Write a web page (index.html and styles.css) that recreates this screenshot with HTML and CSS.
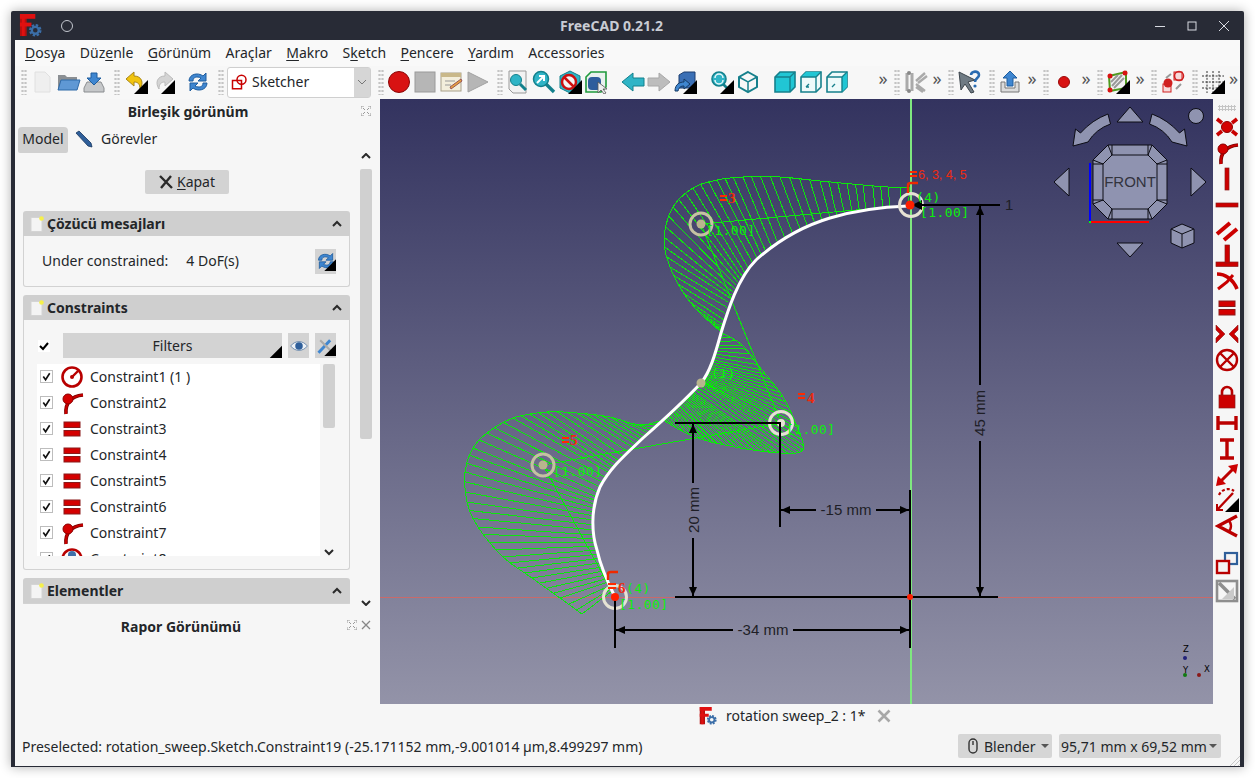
FILE: index.html
```html
<!DOCTYPE html>
<html lang="tr">
<head>
<meta charset="utf-8">
<title>FreeCAD 0.21.2</title>
<link rel="stylesheet" href="styles.css">
</head>
<body>
<svg class="defs" aria-hidden="true">
  <symbol id="logo" viewBox="0 0 24 24">
    <rect x="1" y="0" width="7" height="23" fill="#b50f0f"/><rect x="1" y="0" width="16" height="5" fill="#e01010"/><rect x="1" y="9" width="12" height="4" fill="#e01010"/><rect x="3" y="0" width="3" height="23" fill="#e01010"/>
    <circle cx="17" cy="17" r="5" fill="none" stroke="#3b6ea8" stroke-width="3" stroke-dasharray="2.4 1.5"/><circle cx="17" cy="17" r="3.6" fill="none" stroke="#3b6ea8" stroke-width="2.4"/>
  </symbol>
  <symbol id="corner" viewBox="0 0 24 24"><polygon points="24,10 24,24 10,24" fill="#000"/></symbol>
  <symbol id="paneldoc" viewBox="0 0 14 16"><rect x="1" y="1.5" width="11" height="14" fill="#f4f4f4" stroke="#d4d4d4"/><circle cx="11.5" cy="2.5" r="2.3" fill="#f6f04a"/></symbol>
  <symbol id="chev" viewBox="0 0 12 12"><path d="M2 8 L6 4 L10 8" fill="none" stroke="#2a2a2a" stroke-width="2"/></symbol>
  <symbol id="chevd" viewBox="0 0 12 12"><path d="M2 4 L6 8 L10 4" fill="none" stroke="#2a2a2a" stroke-width="2"/></symbol>
  <symbol id="refresh" viewBox="0 0 24 24"><path d="M3 11 C3 4 12 2 17 6 L20 3 V11 H12 L15 8 C11 6 7 7 7 11 Z" fill="#3f86d0" stroke="#1f5d9e"/><path d="M21 13 C21 20 12 22 7 18 L4 21 V13 H12 L9 16 C13 18 17 17 17 13 Z" fill="#3f86d0" stroke="#1f5d9e"/></symbol>
  <symbol id="c-tan" viewBox="0 0 24 24"><path d="M6 23 C5 12 11 5 23 4" fill="none" stroke="#7a0000" stroke-width="3.6"/><path d="M6 23 C5 12 11 5 23 4" fill="none" stroke="#c80000" stroke-width="2"/><circle cx="8" cy="8" r="5" fill="#d40000" stroke="#8a0000"/></symbol>
  <symbol id="c-eq" viewBox="0 0 24 24"><rect x="4" y="5" width="16" height="5.5" fill="#d40000" stroke="#8a1a1a"/><rect x="4" y="13.5" width="16" height="5.5" fill="#d40000" stroke="#8a1a1a"/></symbol>
  <symbol id="cube" viewBox="0 0 24 24"><path d="M12 2 L21 7 V17 L12 22 L3 17 V7 Z" fill="none" stroke="#16808c" stroke-width="2"/><path d="M3 7 L12 12 L21 7 M12 12 V22" fill="none" stroke="#16808c" stroke-width="1.5"/></symbol>
</svg>

<div class="window">
  <header class="titlebar">
    <svg class="tlogo"><use href="#logo"/></svg>
    <span class="pin"></span>
    <h1 class="wtitle">FreeCAD 0.21.2</h1>
    <svg class="wbtn" viewBox="0 0 12 12"><path d="M1 6.5 H11" stroke="#d8dbe2" fill="none"/></svg>
    <svg class="wbtn" viewBox="0 0 12 12"><rect x="2" y="2" width="8" height="8" stroke="#d8dbe2" fill="none"/></svg>
    <svg class="wbtn" viewBox="0 0 12 12"><path d="M1 1 L11 11 M11 1 L1 11" stroke="#d8dbe2" fill="none"/></svg>
  </header>

  <div class="content">
    <nav class="menubar">
      <span class="menu"><u>D</u>osya</span>
      <span class="menu">Düz<u>e</u>nle</span>
      <span class="menu"><u>G</u>örünüm</span>
      <span class="menu">Araçlar</span>
      <span class="menu"><u>M</u>akro</span>
      <span class="menu">S<u>k</u>etch</span>
      <span class="menu"><u>P</u>encere</span>
      <span class="menu"><u>Y</u>ardım</span>
      <span class="menu">Accessories</span>
    </nav>

    <div class="toolbar">
      <span class="grip m6"></span>
      <svg class="ti m2" viewBox="0 0 24 24"><path d="M5 2 H15 L20 7 V22 H5 Z" fill="#efefef" stroke="#e0e0e0"/></svg>
      <svg class="ti" viewBox="0 0 24 24"><path d="M2 5 H9 L11 7 H21 V20 H2 Z" fill="#8b8f93"/><path d="M5 10 H24 L21 20 H2 Z" fill="#5f98d4" stroke="#2f6aa8"/></svg>
      <svg class="ti" viewBox="0 0 24 24"><path d="M5 12 H19 L22 18 V22 H2 V18 Z" fill="#c6c8ca" stroke="#8a8d90"/><path d="M9 3 H15 V8 H19 L12 15 L5 8 H9 Z" fill="#3f86d0" stroke="#1f5d9e"/></svg>
      <span class="grip m7"></span>
      <svg class="ti m3" viewBox="0 0 24 24"><path d="M10 2 L2 9 L10 16 V12 C14 12 16 14 16 19 C20 13 18 6 10 6 Z" fill="#f1c40f" stroke="#a8861a"/><use href="#corner"/></svg>
      <svg class="ti m1" viewBox="0 0 24 24"><path d="M14 2 L22 9 L14 16 V12 C10 12 8 14 8 19 C4 13 6 6 14 6 Z" fill="#d4d4d4" stroke="#bbb"/><use href="#corner"/></svg>
      <svg class="ti m9" viewBox="0 0 24 24"><use href="#refresh"/></svg>
      <span class="grip m7"></span>
      <div class="combo m3">
        <svg class="combo-ic" viewBox="0 0 24 24"><rect x="2" y="10" width="12" height="11" fill="#fff" stroke="#c80000" stroke-width="2"/><circle cx="14" cy="9" r="6" fill="none" stroke="#c80000" stroke-width="2"/></svg>
        <span class="combo-text">Sketcher</span>
        <span class="combo-arrow"><svg viewBox="0 0 12 12"><path d="M2 4 L6 8 L10 4" fill="none" stroke="#777"/></svg></span>
      </div>
      <span class="grip m7"></span>
      <svg class="ti m2" viewBox="0 0 24 24"><circle cx="12" cy="12" r="10.5" fill="#d81212" stroke="#8a0606"/></svg>
      <svg class="ti" viewBox="0 0 24 24"><rect x="2" y="2" width="20" height="20" fill="#b6b6b6" stroke="#9a9a9a"/></svg>
      <svg class="ti" viewBox="0 0 24 24"><rect x="2" y="3" width="20" height="18" fill="#f3eedc" stroke="#a8a08a"/><rect x="2" y="3" width="20" height="4" fill="#c9b88a"/><path d="M6 11 H16 M6 15 H12" stroke="#999"/><path d="M11 17 L22 9 L23 11 L12 19 Z" fill="#e8a33d" stroke="#955"/></svg>
      <svg class="ti" viewBox="0 0 24 24"><polygon points="3,2 23,12 3,22" fill="#b6b6b6" stroke="#a2a2a2"/></svg>
      <span class="grip m7"></span>
      <svg class="ti m2" viewBox="0 0 24 24"><path d="M3 1 H20 V23 H7 L3 19 Z" fill="#f2f2f2" stroke="#999"/><circle cx="10" cy="10" r="5.5" fill="#2fb4c6" stroke="#13808c"/><path d="M14 14 L20 20" stroke="#13808c" stroke-width="3"/></svg>
      <svg class="ti" viewBox="0 0 24 24"><circle cx="9" cy="9" r="7.5" fill="#2fb4c6" stroke="#13808c" stroke-width="1.5"/><path d="M14 14 L22 22" stroke="#13808c" stroke-width="3.4"/><path d="M5 13 L11 7 M7 6 H12 V11" stroke="#fff" stroke-width="2" fill="none"/></svg>
      <svg class="ti" viewBox="0 0 24 24"><path d="M12 1 L22 6 V18 L12 23 L2 18 V6 Z" fill="#2fb4c6" stroke="#13808c"/><circle cx="11" cy="12" r="7" fill="#f4f4f4" stroke="#cc1010" stroke-width="2.5"/><path d="M6 7 L16 17" stroke="#cc1010" stroke-width="2.5"/><use href="#corner"/></svg>
      <svg class="ti" viewBox="0 0 24 24"><path d="M2 7 L7 2 H22 V17 L17 22 H2 Z" fill="#e9f1ee" stroke="#1f9a3c" stroke-width="1.6"/><rect x="4" y="7" width="13" height="13" rx="4" fill="#2e5d9c"/><path d="M14 12 L14 23 L17 20 L20 24 L22 23 L19 19 L23 19 Z" fill="#eee" stroke="#555" stroke-width=".8"/></svg>
      <svg class="ti m11" viewBox="0 0 24 24"><polygon points="1,12 12,3 12,8 23,8 23,16 12,16 12,21" fill="#2fb4c6" stroke="#13808c"/></svg>
      <svg class="ti" viewBox="0 0 24 24"><polygon points="23,12 12,3 12,8 1,8 1,16 12,16 12,21" fill="#bdbdbd" stroke="#a8a8a8"/></svg>
      <svg class="ti" viewBox="0 0 24 24"><path d="M6 5 L11 2 H22 V14 L19 18 H6 Z" fill="#3a6fb5" stroke="#1d3f70"/><path d="M2 21 C2 14 7 12 11 12 V9 L17 14 L11 19 V16 C8 16 6 17 5 21 Z" fill="#3f86d0" stroke="#153a63"/><use href="#corner"/></svg>
      <svg class="ti m11" viewBox="0 0 24 24"><circle cx="9" cy="9" r="7" fill="#2fb4c6" stroke="#13808c" stroke-width="1.6"/><path d="M5 8 A4 4 0 0 1 13 8 M13 10 A4 4 0 0 1 5 10" stroke="#eaf6f8" stroke-width="1.5" fill="none"/><path d="M13 14 L20 21" stroke="#13808c" stroke-width="2.6"/><use href="#corner"/></svg>
      <svg class="ti" viewBox="0 0 24 24"><use href="#cube"/></svg>
      <svg class="ti m11" viewBox="0 0 24 24"><path d="M7 2 H22 V17 L17 22 H2 V7 Z" fill="#21c6d4" stroke="#16808c" stroke-width="1.6"/><path d="M2 7 H17 V22 M17 7 L22 2" fill="none" stroke="#16808c" stroke-width="1.4"/></svg>
      <svg class="ti" viewBox="0 0 24 24"><path d="M7 2 H22 V17 L17 22 H2 V7 Z" fill="#eefafa" stroke="#16808c" stroke-width="1.6"/><path d="M2 7 L7 2 H22 L17 7 Z" fill="#21c6d4"/><path d="M2 7 H17 V22 M17 7 L22 2 M7 17 L10 14 M7 17 H10" fill="none" stroke="#16808c" stroke-width="1.4"/></svg>
      <svg class="ti" viewBox="0 0 24 24"><path d="M7 2 H22 V17 L17 22 H2 V7 Z" fill="#eefafa" stroke="#16808c" stroke-width="1.6"/><path d="M17 7 L22 2 V17 L17 22 Z" fill="#21c6d4"/><path d="M2 7 H17 V22 M17 7 L22 2 M7 17 L10 14" fill="none" stroke="#16808c" stroke-width="1.4"/></svg>
      <span class="more m25">»</span>
      <span class="grip m3"></span>
      <svg class="ti m2" viewBox="0 0 24 24"><path d="M4 3 V21 M9 3 V21" stroke="#aaa" stroke-width="3"/><circle cx="6" cy="3" r="2" fill="#888"/><circle cx="6" cy="21" r="2" fill="#888"/><path d="M13 11 L22 3 M15 13 L24 6 M13 14 L22 21 M13 17 L20 22" stroke="#aaa" stroke-width="2.4"/></svg>
      <span class="more m1">»</span>
      <span class="grip m3"></span>
      <svg class="ti m2" viewBox="0 0 24 24"><path d="M2 2 L18 10 L11 12 L17 22 L14 23 L8 14 L4 20 Z" fill="#6f7b84" stroke="#3b444b"/><path d="M14 5 C14 1 22 0 22 5 C22 8 18 8 18 12" fill="none" stroke="#2a6bb0" stroke-width="2.6"/><circle cx="18" cy="16" r="1.6" fill="#2a6bb0"/></svg>
      <span class="grip m7"></span>
      <svg class="ti m2" viewBox="0 0 24 24"><path d="M3 12 V22 H21 V12 H17 V18 H7 V12 Z" fill="#dcdcdc" stroke="#777"/><path d="M9 16 V8 H5 L12 1 L19 8 H15 V16 Z" fill="#3f86d0" stroke="#1f5d9e"/></svg>
      <span class="more m1">»</span>
      <span class="grip m3"></span>
      <svg class="ti m2" viewBox="0 0 24 24"><circle cx="12" cy="12" r="5.5" fill="#d81212" stroke="#9a0a0a"/></svg>
      <span class="more m1">»</span>
      <span class="grip m3"></span>
      <svg class="ti m2" viewBox="0 0 24 24"><path d="M3 6 L20 2 V18 L4 21 Z" fill="#f2f2f2" stroke="#4e9a1e" stroke-width="2"/><path d="M6 16 L16 5 M8 18 L18 8 M5 12 L12 5" stroke="#999" stroke-width="2"/><circle cx="4" cy="6" r="2.5" fill="#d81212"/><circle cx="19" cy="3" r="2.5" fill="#d81212"/><circle cx="4" cy="20" r="2.5" fill="#d81212"/><use href="#corner"/></svg>
      <span class="more m1">»</span>
      <span class="grip m3"></span>
      <svg class="ti m3" viewBox="0 0 24 24"><rect x="13" y="2" width="8" height="8" fill="#f7dada" stroke="#d02020"/><circle cx="18" cy="6" r="4.5" fill="none" stroke="#d02020" stroke-width="1.6"/><rect x="2" y="14" width="8" height="8" fill="#f7dada" stroke="#d02020"/><circle cx="7" cy="13" r="4.5" fill="#d02020"/><path d="M5 8 L10 4 M15 19 L20 14" stroke="#999" stroke-width="2"/></svg>
      <span class="grip m6"></span>
      <svg class="ti m2" viewBox="0 0 24 24"><path d="M1 6 H23 M1 12 H23 M1 18 H23 M6 1 V23 M12 1 V23 M18 1 V23" stroke="#333" stroke-width="1" stroke-dasharray="2 1.4" fill="none"/><use href="#corner"/></svg>
      <span class="more m1 last">»</span>
    </div>

    <div class="main">
      <aside class="dock">
        <div class="dock-title">
          <span class="dock-label">Birleşik görünüm</span>
          <svg class="float" viewBox="0 0 10 10"><path d="M0 3 V0 H3 M7 0 H10 V3 M10 7 V10 H7 M3 10 H0 V7 M2 2 L4 4 M8 2 L6 4 M8 8 L6 6 M2 8 L4 6" fill="none" stroke="#999"/></svg>
        </div>
        <div class="tabs">
          <span class="tab active">Model</span>
          <span class="tab">
            <svg class="tab-ic" viewBox="0 0 18 18"><path d="M1 3 L4 1 L16 13 L17 17 L13 16 Z" fill="#2f5f9a" stroke="#16365e" stroke-width=".8"/></svg>
            Görevler
          </span>
        </div>
        <div class="scroll">
          <div class="scroll-body">
            <button class="close-btn">
              <svg class="close-ic" viewBox="0 0 14 14"><path d="M1 1 L13 13 M12 1 L2 13" stroke="#2a2a2a" stroke-width="2.4"/></svg>
              <span><u>K</u>apat</span>
            </button>
            <section class="panel">
              <div class="panel-head"><svg class="pdoc"><use href="#paneldoc"/></svg><span class="panel-title">Çözücü mesajları</span><svg class="pchev"><use href="#chev"/></svg></div>
              <div class="panel-body solver">
                <span>Under constrained:</span><span class="dof">4 DoF(s)</span>
                <span class="ibtn end"><svg viewBox="0 0 24 24"><use href="#refresh"/><use href="#corner"/></svg></span>
              </div>
            </section>
            <section class="panel">
              <div class="panel-head"><svg class="pdoc"><use href="#paneldoc"/></svg><span class="panel-title">Constraints</span><svg class="pchev"><use href="#chev"/></svg></div>
              <div class="panel-body constraints">
                <div class="filters">
                  <span class="allcheck"><svg viewBox="0 0 12 12"><path d="M2 6 L5 9 L10 3" fill="none" stroke="#000" stroke-width="2"/></svg></span>
                  <button class="filter-btn">Filters<svg class="corner"><use href="#corner"/></svg></button>
                  <span class="ibtn"><svg viewBox="0 0 24 24"><path d="M2 12 C7 5 17 5 22 12 C17 19 7 19 2 12 Z" fill="#eef2f6" stroke="#5c7ea6"/><circle cx="12" cy="12" r="4.5" fill="#2f5f9a"/></svg></span>
                  <span class="ibtn"><svg viewBox="0 0 24 24"><path d="M3 20 L17 5" stroke="#3f86d0" stroke-width="3.5"/><path d="M5 5 L18 18" stroke="#aaa" stroke-width="2.5"/><use href="#corner"/></svg></span>
                </div>
                <div class="listwrap">
                  <ul class="clist">
                    <li><span class="cb"><svg viewBox="0 0 12 12"><path d="M2.5 6 L5 9.5 L9.5 2.5" fill="none" stroke="#111" stroke-width="1.8"/></svg></span><svg class="ci" viewBox="0 0 24 24"><circle cx="12" cy="12" r="9.5" fill="#fff" stroke="#b80000" stroke-width="2.6"/><path d="M12 12 L18 6" stroke="#b80000" stroke-width="2.4"/><circle cx="12" cy="12" r="2" fill="#b80000"/></svg>Constraint1 (1 )</li>
                    <li><span class="cb"><svg viewBox="0 0 12 12"><path d="M2.5 6 L5 9.5 L9.5 2.5" fill="none" stroke="#111" stroke-width="1.8"/></svg></span><svg class="ci"><use href="#c-tan"/></svg>Constraint2</li>
                    <li><span class="cb"><svg viewBox="0 0 12 12"><path d="M2.5 6 L5 9.5 L9.5 2.5" fill="none" stroke="#111" stroke-width="1.8"/></svg></span><svg class="ci"><use href="#c-eq"/></svg>Constraint3</li>
                    <li><span class="cb"><svg viewBox="0 0 12 12"><path d="M2.5 6 L5 9.5 L9.5 2.5" fill="none" stroke="#111" stroke-width="1.8"/></svg></span><svg class="ci"><use href="#c-eq"/></svg>Constraint4</li>
                    <li><span class="cb"><svg viewBox="0 0 12 12"><path d="M2.5 6 L5 9.5 L9.5 2.5" fill="none" stroke="#111" stroke-width="1.8"/></svg></span><svg class="ci"><use href="#c-eq"/></svg>Constraint5</li>
                    <li><span class="cb"><svg viewBox="0 0 12 12"><path d="M2.5 6 L5 9.5 L9.5 2.5" fill="none" stroke="#111" stroke-width="1.8"/></svg></span><svg class="ci"><use href="#c-eq"/></svg>Constraint6</li>
                    <li><span class="cb"><svg viewBox="0 0 12 12"><path d="M2.5 6 L5 9.5 L9.5 2.5" fill="none" stroke="#111" stroke-width="1.8"/></svg></span><svg class="ci"><use href="#c-tan"/></svg>Constraint7</li>
                    <li><span class="cb"><svg viewBox="0 0 12 12"><path d="M2.5 6 L5 9.5 L9.5 2.5" fill="none" stroke="#111" stroke-width="1.8"/></svg></span><svg class="ci" viewBox="0 0 24 24"><circle cx="12" cy="12" r="9.5" fill="#fff" stroke="#b80000" stroke-width="2.6"/><circle cx="12" cy="8" r="4" fill="#3f6fa8"/></svg>Constraint8</li>
                  </ul>
                  <div class="listbar">
                    <span class="listthumb"></span>
                    <svg class="listchev"><use href="#chevd"/></svg>
                  </div>
                </div>
              </div>
            </section>
            <section class="panel">
              <div class="panel-head"><svg class="pdoc"><use href="#paneldoc"/></svg><span class="panel-title">Elementler</span><svg class="pchev"><use href="#chev"/></svg></div>
              <div class="panel-body"></div>
            </section>
          </div>
          <div class="vbar">
            <svg class="vchev"><use href="#chev"/></svg>
            <span class="vthumb"></span>
            <svg class="vchev bottom"><use href="#chevd"/></svg>
          </div>
        </div>
        <div class="dock-title report">
          <span class="dock-label">Rapor Görünümü</span>
          <svg class="float" viewBox="0 0 10 10"><path d="M0 3 V0 H3 M7 0 H10 V3 M10 7 V10 H7 M3 10 H0 V7 M2 2 L4 4 M8 2 L6 4 M8 8 L6 6 M2 8 L4 6" fill="none" stroke="#999"/></svg>
          <svg class="float" viewBox="0 0 10 10"><path d="M1 1 L9 9 M9 1 L1 9" fill="none" stroke="#888" stroke-width="1.3"/></svg>
        </div>
      </aside>

      <div class="viewport">
        <svg class="scene" viewBox="380 99 833 605" width="833" height="605">
          <path class="axis-x" d="M380 597 H1213"/>
          <path class="axis-y" d="M911 99 V704"/>
          <g id="comb" class="comb"></g>
          <path class="ctrl" d="M911 205 L701 224 L781 423 L543 465 L615 597"/>
          <path class="curve" d="M908 206 C880 207 850 212 830 218 C800 227 775 243 756 260 C738 278 728 310 721 333 C715 355 710 372 701 383 C685 400 660 423 643 438 C625 455 610 468 600 487 C590 510 592 535 597 550 C601 568 608 583 615 597"/>

          <g class="poles">
            <circle class="pole tan" cx="701" cy="224" r="11"/><circle class="pdot" cx="701" cy="224" r="4.5"/>
            <circle class="pole" cx="781" cy="423" r="11.5"/><circle class="pdot light" cx="781" cy="423" r="4"/>
            <circle class="pole tan" cx="543" cy="465" r="11"/><circle class="pdot" cx="543" cy="465" r="4.5"/>
            <circle class="pole" cx="911" cy="205" r="11.5"/>
            <circle class="pole" cx="615" cy="597" r="11.5"/>
            <circle class="pdot" cx="701" cy="383" r="4.5"/>
          </g>

          <g class="dims">
            <path d="M911 205 H1000"/>
            <path d="M980 205 V385 M980 441 V597"/>
            <path d="M675 597 H998"/>
            <path d="M675 423 H781"/>
            <path d="M693 423 V483 M693 538 V597"/>
            <path d="M780 423 V527"/>
            <path d="M910 490 V648"/>
            <path d="M780 510 H816 M876 510 H910"/>
            <path d="M615 597 V648"/>
            <path d="M615 630 H733 M793 630 H910"/>
          </g>
          <g class="arrows">
            <polygon points="980,206 976,215 984,215"/>
            <polygon points="980,596 976,587 984,587"/>
            <polygon points="693,424 689,433 697,433"/>
            <polygon points="693,596 689,587 697,587"/>
            <polygon points="781,510 790,506 790,514"/>
            <polygon points="909,510 900,506 900,514"/>
            <polygon points="616,630 625,626 625,634"/>
            <polygon points="909,630 900,626 900,634"/>
            <polygon points="912,205 922,200 922,210"/>
          </g>
          <text class="dimt" x="1005" y="210">1</text>
          <text class="dimt" transform="translate(985 413) rotate(-90)" text-anchor="middle">45 mm</text>
          <text class="dimt" transform="translate(699 510) rotate(-90)" text-anchor="middle">20 mm</text>
          <text class="dimt" x="846" y="515" text-anchor="middle">-15 mm</text>
          <text class="dimt" x="763" y="635" text-anchor="middle">-34 mm</text>

          <circle class="rdot" cx="910" cy="205" r="4.5"/>
          <circle class="rdot" cx="615" cy="597" r="4"/>
          <circle class="rdot" cx="910" cy="597" r="3"/>

          <g class="glabels">
            <text x="920" y="217">[1.00]</text><text x="916" y="202">(4)</text>
            <text x="706" y="235">[1.00]</text><text x="711" y="378">(1)</text>
            <text x="786" y="434">[1.00]</text>
            <text x="553" y="476">[1.00]</text>
            <text x="619" y="609">[1.00]</text><text x="626" y="593">(4)</text>
          </g>
          <g class="rmarks">
            <rect x="910" y="171" width="7" height="2"/><rect x="910" y="175" width="7" height="2"/>
            <rect x="720" y="195" width="7" height="2"/><rect x="720" y="199" width="7" height="2"/>
            <rect x="798" y="393" width="7" height="2"/><rect x="798" y="397" width="7" height="2"/>
            <rect x="562" y="437" width="7" height="2"/><rect x="562" y="441" width="7" height="2"/>
            <rect x="608" y="583" width="8" height="2"/><rect x="608" y="587" width="8" height="2"/>
            <path d="M908 193 V185 Q908 183 911 183 H918 M608 580 V574 Q608 572 611 572 H618" class="rtan"/>
          </g>
          <g class="rlabels">
            <text class="rlist" x="918" y="179">6, 3, 4, 5</text>
            <text x="728" y="203">3</text>
            <text x="807" y="403">4</text>
            <text x="570" y="445">5</text>
            <text x="618" y="593">6</text>
          </g>

          <g class="navcube">
            <path d="M1108 145 H1152 L1167 160 V204 L1152 219 H1108 L1093 204 V160 Z"/>
            <path class="inner" d="M1112 155 H1148 L1157 164 V200 L1148 209 H1112 L1103 200 V164 Z"/>
            <path class="inner" d="M1108 145 L1112 155 M1152 145 L1148 155 M1167 160 L1157 164 M1167 204 L1157 200 M1152 219 L1148 209 M1108 219 L1112 209 M1093 204 L1103 200 M1093 160 L1103 164 M1112 145 V155 M1148 145 V155 M1112 219 V209 M1148 219 V209 M1093 164 H1103 M1093 200 H1103 M1167 164 H1157 M1167 200 H1157"/>
            <polygon points="1117,122 1130,107 1143,122"/>
            <polygon points="1117,243 1143,243 1130,257"/>
            <polygon points="1069,168 1054,182 1069,196"/>
            <polygon points="1191,168 1206,182 1191,196"/>
            <circle cx="1196" cy="116" r="7.5"/>
            <path d="M1108 114 L1110.5 124 Q1096 129 1088 142 L1073 146 L1075.5 129 L1080.5 133 Q1092 120 1108 114 Z"/>
            <path d="M1152 114 L1149.5 124 Q1164 129 1172 142 L1187 146 L1184.5 129 L1179.5 133 Q1168 120 1152 114 Z"/>
            <path d="M1182 224 L1194 229 V243 L1182 248 L1171 243 V229 Z"/>
            <path class="inner" d="M1171 229 L1182 234 L1194 229 M1182 234 V248"/>
          </g>
          <text class="front" x="1130" y="187" text-anchor="middle">FRONT</text>
          <path class="ax-b" d="M1090 163 V222"/>
          <path class="ax-r" d="M1090 222 H1149"/>
          <rect class="ax-g" x="1089" y="221" width="2" height="2"/>

          <g class="triad">
            <circle class="tb" cx="1185" cy="658" r="2"/><circle class="tg" cx="1185" cy="675" r="2"/><circle class="tr" cx="1199" cy="675" r="2"/>
            <text x="1183" y="652">Z</text><text x="1183" y="673">Y</text><text x="1204" y="672">X</text>
          </g>
        </svg>
      </div>

      <div class="sidebar">
        <span class="hgrip"></span>
        <svg class="si" viewBox="0 0 24 24"><circle cx="12" cy="12" r="5.5" fill="#d40000" stroke="#8a0000"/><path d="M2 4 L7 8 M22 4 L17 8 M2 20 L7 16 M22 20 L17 16" stroke="#c80000" stroke-width="3.6"/></svg>
        <svg class="si"><use href="#c-tan"/></svg>
        <svg class="si" viewBox="0 0 24 24"><rect x="10" y="1" width="4" height="22" fill="#cc0000" stroke="#8a1a1a" stroke-width=".7"/></svg>
        <svg class="si" viewBox="0 0 24 24"><rect x="1" y="10" width="22" height="4" fill="#cc0000" stroke="#8a1a1a" stroke-width=".7"/></svg>
        <svg class="si" viewBox="0 0 24 24"><path d="M2 15 L15 4 M9 21 L22 10" stroke="#cc0000" stroke-width="4"/></svg>
        <svg class="si" viewBox="0 0 24 24"><rect x="1" y="18" width="22" height="4.5" fill="#cc0000" stroke="#8a1a1a" stroke-width=".7"/><rect x="10" y="1" width="4.5" height="18" fill="#cc0000" stroke="#8a1a1a" stroke-width=".7"/></svg>
        <svg class="si" viewBox="0 0 24 24"><path d="M2 4 C10 4 18 9 22 19" fill="none" stroke="#c80000" stroke-width="3.6"/><path d="M3 19 L12 12 L18 5" fill="none" stroke="#c80000" stroke-width="3"/></svg>
        <svg class="si"><use href="#c-eq"/></svg>
        <svg class="si" viewBox="0 0 24 24"><polygon points="1,3 10,12 1,21 1,16 5,12 1,8" fill="#cc0000" stroke="#8a1a1a" stroke-width=".6"/><polygon points="23,3 14,12 23,21 23,16 19,12 23,8" fill="#cc0000" stroke="#8a1a1a" stroke-width=".6"/></svg>
        <svg class="si" viewBox="0 0 24 24"><circle cx="12" cy="12" r="10" fill="none" stroke="#b80000" stroke-width="2.4"/><path d="M5 5 L19 19 M19 5 L5 19" stroke="#b80000" stroke-width="2.4"/></svg>
        <svg class="si gap-top" viewBox="0 0 24 24"><path d="M7 11 V7 A5 5 0 0 1 17 7 V11" fill="none" stroke="#b80000" stroke-width="2.6"/><rect x="4" y="10" width="16" height="13" fill="#cc0000" stroke="#8a1a1a" stroke-width=".7"/></svg>
        <svg class="si" viewBox="0 0 24 24"><path d="M3 5 V19 M21 5 V19 M3 12 H21" stroke="#bb0000" stroke-width="3.4"/></svg>
        <svg class="si" viewBox="0 0 24 24"><path d="M5 3 H19 M5 21 H19 M12 3 V21" stroke="#bb0000" stroke-width="3.4"/></svg>
        <svg class="si" viewBox="0 0 24 24"><path d="M5 19 L19 5" stroke="#bb0000" stroke-width="3"/><polygon points="1,23 3,13 11,21" fill="#cc0000"/><polygon points="23,1 21,11 13,3" fill="#cc0000"/></svg>
        <svg class="si" viewBox="0 0 24 24"><path d="M4 7 A10 10 0 0 1 19 3" fill="none" stroke="#b80000" stroke-width="2.2" stroke-dasharray="3 2"/><path d="M3 21 L18 5" stroke="#b80000" stroke-width="2.4"/><path d="M2 16 V22 H8" fill="none" stroke="#b80000" stroke-width="2"/><use href="#corner"/></svg>
        <svg class="si" viewBox="0 0 24 24"><path d="M22 2 L3 12 L22 22" fill="none" stroke="#bb0000" stroke-width="3.4"/><path d="M13 6 C17 9 17 15 13 18" fill="none" stroke="#bb0000" stroke-width="2.4"/></svg>
        <svg class="si gap-top2" viewBox="0 0 24 24"><rect x="10" y="2" width="12" height="11" fill="#f4f4f4" stroke="#2f5f9a" stroke-width="2.2"/><rect x="2" y="10" width="12" height="12" fill="#f4f4f4" stroke="#b80000" stroke-width="2.4"/></svg>
        <svg class="si tight" viewBox="0 0 24 24"><rect x="2" y="2" width="20" height="20" fill="none" stroke="#8e8e8e" stroke-width="2.6"/><path d="M4 4 L20 20" stroke="#8e8e8e" stroke-width="3.6"/><path d="M7 20 H19 V8 Z" fill="#c9c9c9"/></svg>
      </div>
    </div>

    <div class="tabbar">
      <svg class="doc-ic"><use href="#logo"/></svg>
      <span class="doc-name">rotation sweep_2 : 1*</span>
      <svg class="doc-x" viewBox="0 0 14 14"><path d="M1.5 1.5 L12.5 12.5 M12.5 1.5 L1.5 12.5" stroke="#a8a8a8" stroke-width="2.6"/></svg>
    </div>

    <footer class="status">
      <span class="status-msg">Preselected: rotation_sweep.Sketch.Constraint19 (-25.171152 mm,-9.001014 µm,8.499297 mm)</span>
      <button class="sbtn mouse">
        <svg class="mouse-ic" viewBox="0 0 12 16"><rect x="2" y="1" width="8" height="14" rx="4" fill="none" stroke="#333" stroke-width="1.4"/><path d="M6 3 V7" stroke="#333" stroke-width="1.4"/></svg>
        Blender
        <i class="drop"></i>
      </button>
      <button class="sbtn size">95,71 mm x 69,52 mm<i class="drop"></i></button>
      <svg class="sizegrip" viewBox="0 0 12 12"><path d="M12 2 L2 12 M12 6 L6 12 M12 10 L10 12" stroke="#c8c8c8"/></svg>
    </footer>
  </div>
</div>
<script src="script.js"></script>
</body>
</html>
```
FILE: styles.css
```css
* { box-sizing: border-box; }
html, body { margin: 0; height: 100%; overflow: hidden; background: #fff; }
body { font-family: "Noto Sans", sans-serif; font-size: 14px; color: #232629; }
.defs { display: block; width: 0; height: 0; }
button { font: inherit; color: inherit; border: 0; padding: 0; }
u { text-underline-offset: 2px; }

.window {
  margin: 11px 0 0 11px; width: 1233px; height: 756px;
  background: #282b36; display: flex; flex-direction: column;
  padding: 0 4px 1px; border-radius: 2px 2px 0 0;
  box-shadow: 0 0 12px rgba(0,0,0,.32);
}
.titlebar { height: 29px; display: flex; align-items: center; position: relative; flex: none; }
.tlogo { width: 23px; height: 23px; margin-left: 4px; }
.pin { width: 12px; height: 12px; border: 1px solid #c3c7cf; border-radius: 50%; margin-left: 19px; }
.wtitle { margin: 0; flex: 1; font-size: 14px; font-weight: 700; color: #c8ccd4; text-align: center; padding-right: 4px; }
.wbtn { width: 12px; height: 12px; margin-right: 20px; }
.wbtn:last-child { margin-right: 10px; }

.content { flex: 1; min-height: 0; background: #f6f6f6; display: flex; flex-direction: column; position: relative; }

.menubar { height: 26px; flex: none; display: flex; align-items: center; padding-left: 2.8px; background: #f9f9f9; }
.menu { padding: 0 7.2px; line-height: 26px; }

.toolbar { height: 33px; flex: none; display: flex; align-items: center; padding-bottom: 1px; background: #f7f7f7; }
.grip { width: 6px; height: 26px; flex: none; background: radial-gradient(circle, #c4c4c4 1px, transparent 1.3px) 0 0 / 3px 4px; }
.ti { width: 26px; height: 24px; flex: none; }
.more { width: 16px; flex: none; text-align: center; font-size: 18px; line-height: 20px; color: #555; padding-bottom: 8px; }
.more.last { width: 13px; }
.m1 { margin-left: 1px; } .m2 { margin-left: 2px; } .m3 { margin-left: 3px; } .m6 { margin-left: 6px; }
.m7 { margin-left: 7px; } .m9 { margin-left: 9px; } .m11 { margin-left: 11px; } .m25 { margin-left: 25px; }

.combo { width: 144px; height: 31px; flex: none; display: flex; align-items: center; background: #fff; border: 1px solid #cfcfcf; border-radius: 3px; }
.combo-ic { width: 18px; height: 18px; margin-left: 3px; }
.combo-text { margin-left: 3px; flex: 1; padding-bottom: 1px; }
.combo-arrow { width: 16px; height: 100%; background: #d6d6d6; display: flex; align-items: center; justify-content: center; }
.combo-arrow svg { width: 12px; height: 12px; }

.main { flex: 1; min-height: 0; display: flex; }

.dock { width: 365px; flex: none; display: flex; flex-direction: column; min-height: 0; }
.dock-title { height: 28px; flex: none; display: flex; align-items: center; padding: 0 9px 4px 0; }
.dock-label { flex: 1; text-align: center; font-weight: 700; }
.float { width: 10px; height: 10px; flex: none; margin-left: 4px; }
.dock-title .dock-label + .float { margin-left: 0; }
.report { height: 98px; padding: 0 9px 0 0; align-items: flex-start; }
.report .dock-label { margin-top: 11px; }
.report .float { margin-top: 14px; }

.tabs { height: 26px; flex: none; display: flex; padding-left: 3px; }
.tab { display: flex; align-items: center; padding: 0 5px 3px; }
.tab.active { width: 50px; background: #d0d0d0; border-radius: 4px 4px 2px 2px; justify-content: center; padding: 0 0 3px; }
.tab-ic { width: 18px; height: 18px; margin: 0 8px 0 2px; }

.scroll { height: 453px; flex: none; display: flex; overflow: hidden; }
.scroll-body { width: 345px; padding-left: 8px; flex: none; overflow: hidden; }
.close-btn { margin: 17px 0 0 122px; width: 84px; height: 24px; padding-bottom: 1px; background: #d3d3d3; border-radius: 2px; display: flex; align-items: center; justify-content: center; gap: 4px; }
.close-ic { width: 14px; height: 14px; }

.panel { width: 327px; margin-top: 8px; }
.close-btn + .panel { margin-top: 17px; }
.panel-head { height: 25px; background: #cfcfcf; border-radius: 3px 3px 0 0; display: flex; align-items: center; padding: 0 7px; }
.pdoc { width: 14px; height: 16px; flex: none; }
.panel-title { flex: 1; margin-left: 3px; font-weight: 700; }
.pchev { width: 12px; height: 12px; flex: none; }
.panel-body { border: 1px solid #d2d2d2; border-top: 0; border-radius: 0 0 3px 3px; }
.solver { height: 51px; display: flex; align-items: center; padding: 0 13px 2px 18px; }
.dof { margin-left: 18px; }
.end { margin-left: auto; margin-top: 2px; }
.ibtn { width: 21px; height: 25px; flex: none; background: #d3d3d3; display: flex; align-items: center; justify-content: center; }
.ibtn svg { width: 20px; height: 20px; }

.constraints { height: 250px; padding: 13px 13px 0 13px; }
.filters { height: 25px; display: flex; align-items: center; }
.allcheck { width: 12px; height: 12px; margin-left: 1px; background: #fff; display: flex; }
.filter-btn { width: 219px; height: 25px; margin: 0 6px 0 13px; padding-bottom: 1px; background: #d3d3d3; position: relative; }
.corner { position: absolute; right: 0; bottom: 0; width: 21px; height: 21px; }
.filters .ibtn + .ibtn { margin-left: 6px; }

.listwrap { display: flex; margin-top: 6px; height: 192px; }
.clist { list-style: none; margin: 0; padding: 0; width: 283px; height: 192px; background: #fff; overflow: hidden; }
.clist li { height: 26px; display: flex; align-items: center; padding: 0 0 1px 3px; }
.cb { width: 13px; height: 13px; border: 1px solid #bdbdbd; background: #fff; display: flex; flex: none; }
.ci { width: 24px; height: 24px; margin: 0 6px 0 7px; flex: none; }
.listbar { width: 14px; margin-left: 2px; display: flex; flex-direction: column; align-items: center; }
.listthumb { width: 12px; height: 64px; background: #d0d0d0; border-radius: 2px; }
.listchev { width: 12px; height: 12px; margin-top: auto; margin-bottom: -2px; }

.vbar { width: 12px; display: flex; flex-direction: column; }
.vchev { width: 12px; height: 12px; flex: none; }
.vchev:first-child { margin-top: -3px; margin-bottom: 7px; }
.vthumb { width: 12px; height: 270px; background: #d0d0d0; border-radius: 2px; flex: none; }
.vchev.bottom { margin-top: auto; margin-bottom: -3px; }

.viewport { flex: 1; min-width: 0; background: linear-gradient(#33335f, #9393a8); overflow: hidden; }
.scene { display: block; }
.axis-x { stroke: #c96a6a; stroke-width: 1; fill: none; shape-rendering: crispEdges; }
.axis-y { stroke: #7fe87f; stroke-width: 2; fill: none; shape-rendering: crispEdges; }
.comb path { fill: none; stroke: #0be80b; stroke-width: 1; shape-rendering: crispEdges; }
.ctrl { fill: none; stroke: #0be80b; stroke-width: 1; shape-rendering: crispEdges; }
.curve { fill: none; stroke: #fff; stroke-width: 3; stroke-linecap: round; }
.pole { fill: none; stroke: #e6e2d4; stroke-width: 3; }
.pole.tan { stroke: #c5c1a2; }
.pdot { fill: #b9b58e; }
.pdot.light { fill: #e6e2d4; }
.dims path { stroke: #000; stroke-width: 2; fill: none; shape-rendering: crispEdges; }
.arrows polygon { fill: #000; }
.dimt { font-family: "Liberation Sans", sans-serif; font-size: 15px; fill: #1e1e26; }
.rdot { fill: #ff1f00; }
.glabels text { font-family: "DejaVu Sans Mono", monospace; font-size: 13px; letter-spacing: .4px; fill: #0bf00b; }
.rmarks rect { fill: #ff2a00; }
.rtan { fill: none; stroke: #ee2a00; stroke-width: 2.4; }
.rlabels text { font-family: "Liberation Serif", serif; font-weight: 700; font-size: 15px; fill: #ee2a10; }
.rlabels .rlist { font-family: "Liberation Sans", sans-serif; font-weight: 400; font-size: 12.5px; }
.navcube path, .navcube polygon, .navcube circle { fill: #8f93b0; stroke: #0c0c14; stroke-width: 1; }
.navcube path.inner { fill: none; }
.front { font-family: "Liberation Sans", sans-serif; font-size: 15px; fill: #33343e; }
.ax-b { stroke: #0000ff; stroke-width: 2; fill: none; shape-rendering: crispEdges; }
.ax-r { stroke: #ff0000; stroke-width: 2; fill: none; shape-rendering: crispEdges; }
.ax-g { fill: #00ff00; }
.tb { fill: #22227a; } .tg { fill: #117a11; } .tr { fill: #8a1818; }
.triad text { font-family: "DejaVu Sans", sans-serif; font-size: 8.5px; fill: #000; }

.sidebar { width: 27px; flex: none; display: flex; flex-direction: column; align-items: center; padding-top: 6px; }
.hgrip { width: 18px; height: 6px; flex: none; background: radial-gradient(circle, #c4c4c4 1px, transparent 1.3px) 0 0 / 3px 3px; margin-bottom: 4px; }
.si { width: 24px; height: 24px; flex: none; margin-bottom: 1.9px; }
.gap-top { margin-top: 11px; }
.gap-top2 { margin-top: 11px; }
.tight { margin-top: 2px; }

.tabbar { height: 26px; flex: none; display: flex; align-items: center; padding: 0 0 3px 684px; }
.doc-ic { width: 18px; height: 18px; flex: none; }
.doc-name { margin-left: 9px; }
.doc-x { width: 14px; height: 14px; margin-left: 12px; flex: none; }

.status { height: 36px; flex: none; display: flex; align-items: center; padding: 0 19px 4px 7px; position: relative; }
.status-msg { flex: 1; white-space: nowrap; }
.sbtn { height: 24px; background: #d6d6d6; border-radius: 2px; display: flex; align-items: center; flex: none; }
.mouse { width: 94px; padding-left: 9px; gap: 5px; margin-right: 7px; }
.size { width: 162px; padding-left: 2px; }
.mouse-ic { width: 12px; height: 16px; flex: none; }
.drop { width: 0; height: 0; border: 4px solid transparent; border-top-color: #555; border-bottom: 0; margin-left: auto; margin-right: 4px; }
.sizegrip { position: absolute; right: 0; bottom: 0; width: 12px; height: 12px; }
```
FILE: script.js
```js
// Curvature comb of the B-spline: [curve x, curve y, tip x, tip y] pairs per lobe, with a line step for each.
var lobes = [
  { step: 9, pts: [[908,206,910,188],[890,207,888,187],[866,210,863,185],[830,218,820,181],[800,229,780,177],[772,248,743,177],
    [757,258,717,180],[745,273,693,188],[738,282,673,207],[733,292,664,237],[728,302,670,267],[723,325,690,302],[722,333,722,333]] },
  { step: 6, pts: [[722,333,722,333],[718,345,742,345],[713,360,762,370],[708,372,783,397],[704,380,797,427],[701,383,803,450],
    [693,392,780,453],[683,400,735,447],[672,411,695,437],[663,420,663,420]] },
  { step: 9, pts: [[663,420,663,420],[655,428,640,425],[645,436,610,417],[632,447,577,413],[618,460,547,412],[608,472,513,418],
    [600,487,487,433],[597,497,473,448],[594,508,465,472],[593,520,467,502],[594,535,478,527],[597,550,503,557],
    [602,567,532,578],[608,582,560,598],[612,591,582,614]] }
];
function cr(a, b, c, d, t) {
  return 0.5 * (2 * b + (c - a) * t + (2 * a - 5 * b + 4 * c - d) * t * t + (3 * b - a - 3 * c + d) * t * t * t);
}
var d = "", g = document.getElementById("comb");
lobes.forEach(function (lobe) {
  var L = lobe.pts, outline = "";
  for (var i = 0; i < L.length - 1; i++) {
    var p0 = L[Math.max(i - 1, 0)], p1 = L[i], p2 = L[i + 1], p3 = L[Math.min(i + 2, L.length - 1)];
    var len = Math.max(Math.hypot(p2[0] - p1[0], p2[1] - p1[1]), Math.hypot(p2[2] - p1[2], p2[3] - p1[3]));
    var n = Math.max(1, Math.round(len / lobe.step));
    for (var k = 0; k < n; k++) {
      var t = k / n;
      var cx = cr(p0[0], p1[0], p2[0], p3[0], t), cy = cr(p0[1], p1[1], p2[1], p3[1], t);
      var ex = cr(p0[2], p1[2], p2[2], p3[2], t), ey = cr(p0[3], p1[3], p2[3], p3[3], t);
      d += "M" + cx.toFixed(1) + " " + cy.toFixed(1) + "L" + ex.toFixed(1) + " " + ey.toFixed(1);
      outline += (outline ? "L" : "M") + ex.toFixed(1) + " " + ey.toFixed(1);
    }
  }
  var last = L[L.length - 1];
  d += "M" + last[0] + " " + last[1] + "L" + last[2] + " " + last[3];
  d += outline + "L" + last[2] + " " + last[3];
});
var path = document.createElementNS("http://www.w3.org/2000/svg", "path");
path.setAttribute("d", d);
g.appendChild(path);
```
